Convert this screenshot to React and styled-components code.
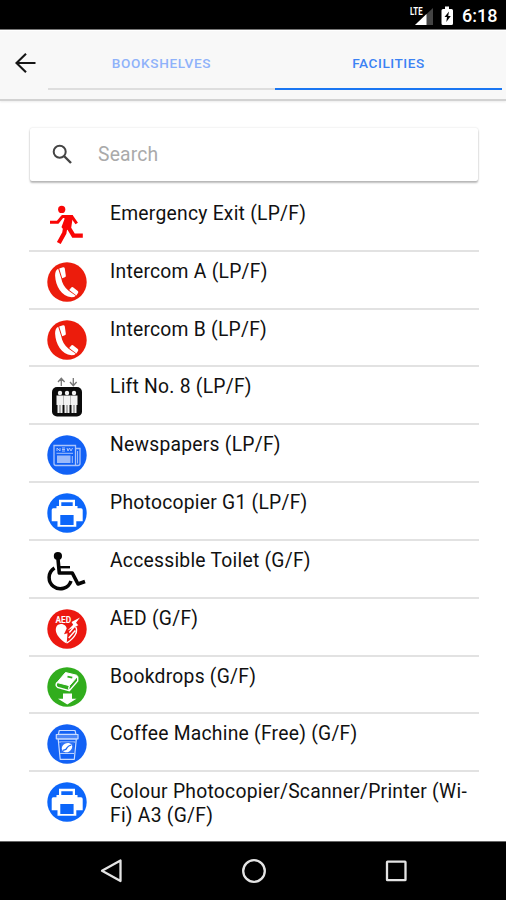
import React, {useState} from "react";
import styled, {createGlobalStyle} from "styled-components";

const GlobalStyle = createGlobalStyle`
    * {
        box-sizing: border-box;
    }
    body {
        margin: 0;
        background-color: #fff;
        font-family: Roboto, "Liberation Sans", sans-serif;
    }
`;

const Screen = styled.div`
    display: flex;
    flex-direction: column;
    width: 506px;
    height: 900px;
    overflow: hidden;
    background-color: #fff;
`;

const StatusBar = styled.div`
    display: flex;
    flex-shrink: 0;
    align-items: center;
    justify-content: flex-end;
    height: 30px;
    padding: 1px 9px 0 0;
    background-color: #000;
    border-bottom: 1px solid #777;
    color: #fff;
`;

const Clock = styled.span`
    width: 34px;
    margin-right: 1px;
    margin-left: 8px;
    padding-top: 2px;
    font-size: 18px;
    font-weight: 500;
    line-height: 28px;
    white-space: nowrap;
`;

const Header = styled.header`
    display: flex;
    flex-shrink: 0;
    height: 71px;
    padding-right: 4px;
    background-color: #f8f8f8;
    border-top: 1px solid #fff;
    border-bottom: 2px solid #d2d2d2;
    box-shadow: 0 1px 2px rgba(0, 0, 0, 0.08);
`;

const Back = styled.button`
    display: flex;
    align-items: center;
    width: 48px;
    height: 64px;
    padding: 0 0 0 14px;
    border: 0;
    background: none;
`;

const Tabs = styled.nav`
    display: flex;
    flex: 1;
    height: 59px;
`;

const Tab = styled.button`
    flex: 1;
    padding: 6px 0 0;
    border: 0;
    border-bottom: 2px solid ${props => props.$selected ? "#1a76f2" : "#dedede"};
    background: none;
    color: ${props => props.$selected ? "#3b82f4" : "#8fb2fa"};
    font-family: inherit;
    font-size: 13.6px;
    font-weight: 500;
    letter-spacing: ${props => props.$selected ? "0.55px" : "0.65px"};
    cursor: pointer;
`;

const Content = styled.main`
    flex: 1;
    min-height: 0;
    padding: 27px 27px 0 29px;
    overflow: hidden;
`;

const SearchBox = styled.label`
    display: flex;
    align-items: center;
    width: 448px;
    height: 53px;
    margin-left: 1px;
    padding-left: 22px;
    border-radius: 2px;
    background-color: #fff;
    box-shadow: 0 2px 2px rgba(0, 0, 0, 0.26), 0 0 2px rgba(0, 0, 0, 0.16);
`;

const Input = styled.input`
    flex: 1;
    margin-left: 25px;
    padding: 0;
    border: 0;
    outline: 0;
    background: none;
    font-family: inherit;
    font-size: 19.3px;
    letter-spacing: 0.2px;
    &::placeholder {
        color: #aaa;
        opacity: 1;
    }
`;

const List = styled.ul`
    margin: 13px 0 0;
    padding: 0;
    list-style: none;
`;

const Item = styled.li`
    display: flex;
    min-height: 57.83px;
    padding: 9px 0 0 18px;
    border-bottom: 2px solid #e2e2e2;
    &:last-child {
        border-bottom: 0;
    }
`;

const Icon = styled.svg`
    flex-shrink: 0;
    width: 40px;
    height: 40px;
    margin-top: 1px;
`;

const Name = styled.span`
    flex: 1;
    margin: -1px 0 0 23px;
    color: #111;
    font-size: 19.3px;
    line-height: 24px;
    letter-spacing: 0.25px;
`;

const NavBar = styled.footer`
    display: flex;
    flex-shrink: 0;
    align-items: center;
    justify-content: space-between;
    height: 59px;
    padding: 0 97px 0 98px;
    border-top: 1px solid #666;
    background-color: #000;
`;

const ExitIcon = () => (
    <Icon viewBox="0 0 40 40" fill="none" stroke="#f90606" strokeLinejoin="round">
        <circle cx="14.7" cy="5.4" r="3.6" fill="#f90606" stroke="none" />
        <path d="M3 18.2H10.7L15.5 12.4H24.7L29.7 19.5" strokeWidth="3" />
        <path d="M16 11.8H25.2L23.5 23.5L18 26L15.3 23L18.5 14.5Z" fill="#f90606" strokeWidth="1.5" />
        <path d="M18.3 23L17.3 29L11.8 39M21 22.5L26.5 31.7H35.8" strokeWidth="4.3" strokeLinejoin="miter" />
    </Icon>
);

const PhoneIcon = () => (
    <Icon viewBox="0 0 40 40">
        <circle cx="20" cy="20" r="19.7" fill="#ec1c0c" />
        <path d="M11.2 6.8Q8 8.5 8.1 13.5C8.5 24 14.5 34.5 24.5 35.3Q27.5 35.3 28.8 33.8L21.6 28.8C17.3 25 15 21 14.3 16.5Z" fill="#fff" />
        <path d="M12.2 6.5L16 5.3Q17.5 5 17.8 6.5L18.8 13.5Q19 14.9 17.8 15.3L15.2 16.3ZM22.2 28L24.3 25.4Q25 24.6 26 25.3L30.8 28.9Q31.8 29.8 31 31L29.4 33.4Z" fill="#fff" />
    </Icon>
);

const LiftIcon = () => (
    <Icon viewBox="0 0 40 40">
        <path d="M14.3 9V2M11 5L14.3 1.3L17.6 5M26.3 1V8.5M23 5L26.3 8.7L29.6 5" fill="none" stroke="#777" strokeWidth="1.3" />
        <rect x="5" y="10" width="30" height="29.5" rx="5" fill="#0b0b0b" />
        {[13, 20, 27].map(x => (
            <g key={x} fill="#f3f3f3">
                <circle cx={x} cy="16" r="2.2" />
                <path d={`M${x - 3.5} 18.5h7v9.5h-1v8h-2.2v-8h-.6v8h-2.2v-8h-1z`} />
            </g>
        ))}
    </Icon>
);

const NewspaperIcon = () => (
    <Icon viewBox="0 0 40 40">
        <circle cx="20" cy="20" r="19.7" fill="#1261f5" />
        <g fill="none" stroke="#a9c3fb" strokeWidth="1.3">
            <path d="M7 10.5H28.5V30.5H9Q7 30.5 7 28.5ZM28.5 13.5H33V28.5Q33 30.5 30.8 30.5H28" />
            <path d="M9.5 18.3H26M25.3 21V28M30.6 16V28.5" strokeWidth="1" />
        </g>
        <rect x="10" y="20.5" width="13.5" height="7.5" fill="#9bbafa" />
        <path d="M10 16V13L13 16V13M15 13H18M15 14.5H18M15 16H18M20 13L21 16L22.5 13L24 16L25.5 13" fill="none" stroke="#a9c3fb" />
    </Icon>
);

const PrinterIcon = () => (
    <Icon viewBox="0 0 40 40">
        <circle cx="20" cy="20" r="19.7" fill="#0c66fa" />
        <path d="M12 6.7H28V13H30.5V15.3H34Q35.7 15.3 35.7 17V28.3H29.3V33.8H10.5V28.3H4.7V17Q4.7 15.3 6.3 15.3H9.5V13H12Z" fill="#fff" />
        <path d="M14.3 9.2H25.7V13H14.3ZM13.3 22H26.6V32H13.3Z" fill="#0c66fa" />
    </Icon>
);

const WheelchairIcon = () => (
    <Icon viewBox="0 0 40 40" fill="none" stroke="#050505">
        <circle cx="10.9" cy="5" r="4.1" fill="#050505" stroke="none" />
        <path d="M11 8L12.3 22H25.3L31 33L38 30.5" strokeWidth="3.6" strokeLinejoin="round" />
        <path d="M11.5 16.2H23" strokeWidth="2.4" />
        <path d="M7.5 17A11.2 11.2 0 1 0 24 30" strokeWidth="3.5" />
    </Icon>
);

const AedIcon = () => (
    <Icon viewBox="0 0 40 40">
        <circle cx="20" cy="20" r="19.7" fill="#ec1810" />
        <path d="M19.7 34.5C5 26 7.5 15 13.8 15C17.7 15 19.5 17.5 19.7 19.5L17 25.2L20.5 24.3Z" fill="#fff" />
        <path d="M28.5 17.6C31.5 22 28 29 20 33.8M22.3 23.5L27.5 17.5M21.7 29L28.3 21.5" fill="none" stroke="#fff" strokeWidth="1.4" />
        <path d="M33 8.5L24.5 13L26.2 15.7L20.5 21.5L31.3 16.2L29 13.7Z" fill="#fff" />
        <text x="8.5" y="14" fill="#fff" fontFamily="Roboto" fontSize="8.3" fontWeight="700">AED</text>
    </Icon>
);

const BookdropIcon = () => (
    <Icon viewBox="0 0 40 40">
        <circle cx="20" cy="20" r="19.7" fill="#31ad1d" />
        <path d="M18.5 5.5L29.5 8.2Q31 8.6 30 10L22.5 18.7L10 15.5Z" fill="#fff" stroke="#fff" strokeLinejoin="round" />
        <path d="M10 15.5Q8 18.5 10.5 20.3L22.3 23.7L30.7 14V9.5M22.5 18.8Q21 21 22.3 23.2" fill="none" stroke="#fff" strokeWidth="1.4" />
        <path d="M20.5 9.6L25.3 10.7" stroke="#31ad1d" strokeWidth="1.7" />
        <path d="M16 26.5H25V31.8H29.5L20.3 37.5L11 31.8H16Z" fill="#fff" />
    </Icon>
);

const CoffeeIcon = () => (
    <Icon viewBox="0 0 40 40">
        <circle cx="20" cy="20" r="19.7" fill="#1261f5" />
        <g fill="#4b86f7" stroke="#c9dbff" strokeWidth="1.2" strokeLinejoin="round">
            <path d="M12.3 6.5H28L29 10.3H11.3Z" fill="#1261f5" />
            <path d="M11.2 15H29.3L27.3 35.3H13.2Z" fill="#1261f5" />
            <path d="M9.3 10.5H31V14.8H9.3Z" />
            <path d="M12.2 18H28.2M13.2 29.5H27" />
        </g>
        <rect x="13.8" y="18.3" width="12.9" height="10.8" fill="#2e72f5" />
        <ellipse cx="20" cy="23.6" rx="5.5" ry="4.4" fill="#fff" transform="rotate(-30 20 23.6)" />
        <path d="M15.8 26.3Q19.5 26 20 23.7Q21 22 24.3 21" fill="none" stroke="#1261f5" strokeWidth="1.2" />
    </Icon>
);

const facilities = [
    {name: "Emergency Exit (LP/F)", icon: ExitIcon},
    {name: "Intercom A (LP/F)", icon: PhoneIcon},
    {name: "Intercom B (LP/F)", icon: PhoneIcon},
    {name: "Lift No. 8 (LP/F)", icon: LiftIcon},
    {name: "Newspapers (LP/F)", icon: NewspaperIcon},
    {name: "Photocopier G1 (LP/F)", icon: PrinterIcon},
    {name: "Accessible Toilet (G/F)", icon: WheelchairIcon},
    {name: "AED (G/F)", icon: AedIcon},
    {name: "Bookdrops (G/F)", icon: BookdropIcon},
    {name: "Coffee Machine (Free) (G/F)", icon: CoffeeIcon},
    {name: "Colour Photocopier/Scanner/Printer (Wi-Fi) A3 (G/F)", icon: PrinterIcon}
];

const App = () => {
    const [tab, setTab] = useState("facilities");

    return (
        <>
            <GlobalStyle />
            <Screen>
                <StatusBar>
                    <svg width="46" height="28" viewBox="0 0 46 28">
                        <path d="M7 24L25 7V24Z" fill="#444" />
                        <path d="M7 24L18.5 13V24Z" fill="#fff" />
                        <text x="2" y="14" fill="#fff" stroke="#000" strokeWidth="1.2" paintOrder="stroke" fontFamily="Roboto" fontSize="11" fontWeight="700" textLength="12.5" lengthAdjust="spacingAndGlyphs">LTE</text>
                        <path d="M37 5.5H41V8H43.5Q45 8 45 9.5V22.5Q45 24 43.5 24H35Q33.5 24 33.5 22.5V9.5Q33.5 8 35 8H37Z" fill="#fff" />
                        <path d="M41 10.5L36.5 16H39L38.3 21L42.8 15H40.2Z" fill="#000" />
                    </svg>
                    <Clock>6:18</Clock>
                </StatusBar>
                <Header>
                    <Back aria-label="Back">
                        <svg width="22" height="22" viewBox="0 0 22 22" fill="none" stroke="#161616" strokeWidth="2.1">
                            <path d="M21.5 11H2.5M12 1.7L2.5 11L12 20.3" />
                        </svg>
                    </Back>
                    <Tabs>
                        <Tab $selected={tab === "bookshelves"} onClick={() => setTab("bookshelves")}>BOOKSHELVES</Tab>
                        <Tab $selected={tab === "facilities"} onClick={() => setTab("facilities")}>FACILITIES</Tab>
                    </Tabs>
                </Header>
                <Content>
                    <SearchBox>
                        <svg width="21" height="21" viewBox="0 0 21 21" fill="none" stroke="#444" strokeWidth="2">
                            <circle cx="7.7" cy="7.7" r="6" />
                            <path d="M12 12L19 19" strokeWidth="2.4" />
                        </svg>
                        <Input placeholder="Search" />
                    </SearchBox>
                    <List>
                        {facilities.map(({name, icon: FacilityIcon}) => (
                            <Item key={name}>
                                <FacilityIcon />
                                <Name>{name}</Name>
                            </Item>
                        ))}
                    </List>
                </Content>
                <NavBar>
                    <svg width="26" height="26" viewBox="0 0 26 26" fill="none" stroke="#e4e4e4" strokeWidth="2.3">
                        <path d="M22.5 2.5V23L4 12.8Z" strokeLinejoin="round" />
                    </svg>
                    <svg width="26" height="26" viewBox="0 0 26 26" fill="none" stroke="#e4e4e4" strokeWidth="2.3">
                        <circle cx="13" cy="13" r="10.8" />
                    </svg>
                    <svg width="26" height="26" viewBox="0 0 26 26" fill="none" stroke="#e4e4e4" strokeWidth="2.3">
                        <rect x="4" y="3.7" width="18.5" height="18.5" rx="0.5" />
                    </svg>
                </NavBar>
            </Screen>
        </>
    );
};

export default App;
